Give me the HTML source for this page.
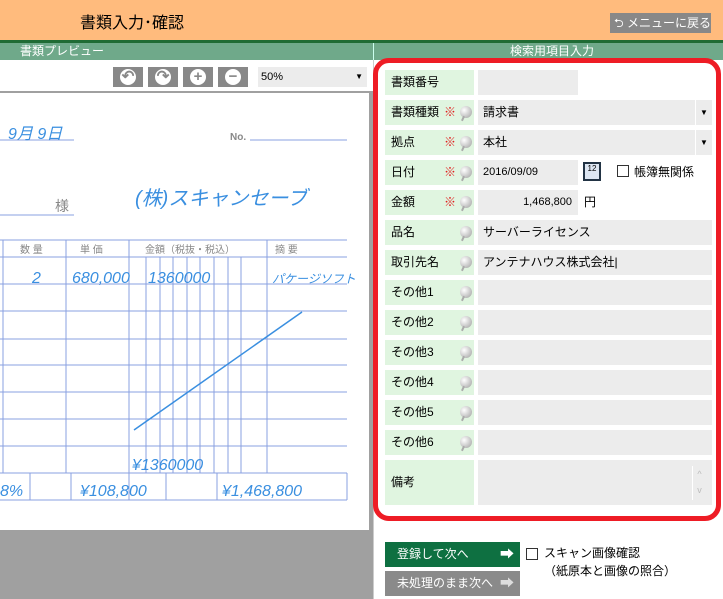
<!DOCTYPE html>
<html><head><meta charset="utf-8"><style>
*{margin:0;padding:0;box-sizing:border-box}
body{width:723px;height:599px;overflow:hidden;background:#fff;font-family:"Liberation Sans","Noto Sans CJK JP",sans-serif;position:relative;font-size:12px;color:#000}
.a{position:absolute}
.lbl{position:absolute;left:385px;width:89px;height:25px;background:#e0f5e0;font-size:12px;line-height:25px;padding-left:6px}
.inp{position:absolute;left:478px;height:25px;background:#ececec;font-size:12px;line-height:25px;padding-left:5px}
.req{position:absolute;left:444px;color:#e02020;font-size:12px;line-height:25px}
.pin{position:absolute;left:460px;width:12px;height:12px;border-radius:50%;background:radial-gradient(circle at 35% 35%,#fff,#bbb 70%,#999)}
.pin:after{content:"";position:absolute;left:2px;top:10px;width:2px;height:5px;background:#aaa;transform:rotate(25deg)}
.tb{position:absolute;top:67px;width:30px;height:20px;background:#888}
.tb i{position:absolute;left:7px;top:2px;width:16px;height:16px;border-radius:50%;background:#fff;color:#888;font-style:normal;font-weight:bold;font-size:15px;line-height:16px;text-align:center}
</style></head><body>
<div class="a" style="left:0;top:0;width:723px;height:40px;background:#ffbb7d"></div>
<div class="a" style="left:80px;top:9px;font-size:16px">書類入力･確認</div>
<div class="a" style="left:610px;top:13px;width:101px;height:20px;background:#888;color:#fff;font-size:12px;line-height:20px;padding-left:4px">⮌ メニューに戻る</div>
<div class="a" style="left:0;top:40px;width:723px;height:3px;background:#1f6b34"></div>
<div class="a" style="left:0;top:43px;width:723px;height:17px;background:#6fa98a"></div>
<div class="a" style="left:373px;top:43px;width:1px;height:17px;background:#cfe"></div>
<div class="a" style="left:20px;top:43px;color:#fff;font-size:12px;line-height:17px">書類プレビュー</div>
<div class="a" style="left:510px;top:43px;color:#fff;font-size:12px;line-height:17px">検索用項目入力</div>
<div class="tb" style="left:113px"><i>↶</i></div>
<div class="tb" style="left:148px"><i>↷</i></div>
<div class="tb" style="left:183px"><i>+</i></div>
<div class="tb" style="left:218px"><i>−</i></div>
<div class="a" style="left:258px;top:67px;width:109px;height:20px;background:#ececec;font-size:11px;line-height:20px;padding-left:3px">50%<span style="position:absolute;right:4px;font-size:8px">▼</span></div>
<div class="a" style="left:0;top:91px;width:373px;height:508px;background:#a0a0a0"></div>
<svg class="a" style="left:0;top:93px" width="369" height="437" viewBox="0 0 369 437">
<rect width="369" height="437" fill="#fff"/>
<g stroke="#8aa0e0" stroke-width="1" fill="none">
<line x1="0" y1="47" x2="74" y2="47"/><line x1="250" y1="47" x2="347" y2="47"/>
<line x1="0" y1="122" x2="74" y2="122"/>
<line x1="0" y1="147" x2="347" y2="147"/><line x1="0" y1="164" x2="347" y2="164"/>
<line x1="0" y1="191" x2="347" y2="191"/><line x1="0" y1="218" x2="347" y2="218"/>
<line x1="0" y1="246" x2="347" y2="246"/><line x1="0" y1="272" x2="347" y2="272"/>
<line x1="0" y1="299" x2="347" y2="299"/><line x1="0" y1="326" x2="347" y2="326"/>
<line x1="0" y1="353" x2="347" y2="353"/><line x1="0" y1="380" x2="347" y2="380"/>
<line x1="0" y1="407" x2="347" y2="407"/>
<line x1="3" y1="147" x2="3" y2="380"/><line x1="66" y1="147" x2="66" y2="380"/>
<line x1="129" y1="147" x2="129" y2="407"/><line x1="267" y1="147" x2="267" y2="380"/>
<line x1="146" y1="164" x2="146" y2="380"/><line x1="160" y1="164" x2="160" y2="380"/><line x1="173" y1="164" x2="173" y2="380"/><line x1="187" y1="164" x2="187" y2="380"/><line x1="200" y1="164" x2="200" y2="380"/><line x1="214" y1="164" x2="214" y2="380"/><line x1="228" y1="164" x2="228" y2="380"/><line x1="241" y1="164" x2="241" y2="380"/>
<line x1="30" y1="380" x2="30" y2="407"/><line x1="71" y1="380" x2="71" y2="407"/><line x1="166" y1="380" x2="166" y2="407"/><line x1="217" y1="380" x2="217" y2="407"/><line x1="347" y1="380" x2="347" y2="407"/>
</g>
<line x1="134" y1="337" x2="302" y2="219" stroke="#3a8fe0" stroke-width="1.5"/>
<g fill="#3a8fe0" font-size="16" font-style="italic">
<text x="8" y="46">9月 9日</text>
<text x="135" y="112" font-size="20">(株)スキャンセーブ</text>
<text x="32" y="190">2</text><text x="72" y="190">680,000</text><text x="148" y="190">1360000</text>
<text x="272" y="190" font-size="12">パケージソフト</text>
<text x="132" y="377">¥1360000</text>
<text x="0" y="403">8%</text><text x="80" y="403">¥108,800</text><text x="222" y="403">¥1,468,800</text>
</g>
<g fill="#888" font-size="10"><text x="230" y="47" font-weight="bold">No.</text><text x="55" y="118" font-size="14">様</text>
<text x="20" y="160">数 量</text><text x="80" y="160">単 価</text><text x="145" y="160">金額（税抜・税込）</text><text x="275" y="160">摘 要</text></g>
</svg>
<div class="a" style="left:373px;top:60px;width:1px;height:539px;background:#ccc"></div>
<div class="a" style="left:373px;top:58px;width:348px;height:463px;border:5px solid #ee1c25;border-radius:16px"></div>

<div class="lbl" style="top:70px">書類番号</div><div class="inp" style="top:70px;width:100px"></div>

<div class="lbl" style="top:100px">書類種類</div><span class="req" style="top:100px">※</span><span class="pin" style="top:106px"></span>
<div class="inp" style="top:100px;width:234px">請求書<span style="position:absolute;right:0;width:17px;border-left:1px solid #fff;text-align:center;font-size:8px">▼</span></div>
<div class="lbl" style="top:130px">拠点</div><span class="req" style="top:130px">※</span><span class="pin" style="top:136px"></span>
<div class="inp" style="top:130px;width:234px">本社<span style="position:absolute;right:0;width:17px;border-left:1px solid #fff;text-align:center;font-size:8px">▼</span></div>
<div class="lbl" style="top:160px">日付</div><span class="req" style="top:160px">※</span><span class="pin" style="top:166px"></span>
<div class="inp" style="top:160px;width:100px;font-size:11px">2016/09/09</div>
<div class="a" style="left:583px;top:162px;width:18px;height:19px;background:#dde6f2;border:2px solid #234;font-size:8px;text-align:center;line-height:10px">12</div>
<div class="a" style="left:617px;top:165px;width:12px;height:12px;border:1px solid #333"></div>
<div class="a" style="left:634px;top:160px;line-height:25px">帳簿無関係</div>
<div class="lbl" style="top:190px">金額</div><span class="req" style="top:190px">※</span><span class="pin" style="top:196px"></span>
<div class="inp" style="top:190px;width:100px;text-align:right;padding-right:6px;font-size:11px">1,468,800</div>
<div class="a" style="left:584px;top:190px;line-height:25px">円</div>
<div class="lbl" style="top:220px">品名</div><span class="pin" style="top:226px"></span><div class="inp" style="top:220px;width:234px">サーバーライセンス</div>
<div class="lbl" style="top:250px">取引先名</div><span class="pin" style="top:256px"></span><div class="inp" style="top:250px;width:234px">アンテナハウス株式会社|</div>
<div class="lbl" style="top:280px">その他1</div><span class="pin" style="top:286px"></span><div class="inp" style="top:280px;width:234px"></div>
<div class="lbl" style="top:310px">その他2</div><span class="pin" style="top:316px"></span><div class="inp" style="top:310px;width:234px"></div>
<div class="lbl" style="top:340px">その他3</div><span class="pin" style="top:346px"></span><div class="inp" style="top:340px;width:234px"></div>
<div class="lbl" style="top:370px">その他4</div><span class="pin" style="top:376px"></span><div class="inp" style="top:370px;width:234px"></div>
<div class="lbl" style="top:400px">その他5</div><span class="pin" style="top:406px"></span><div class="inp" style="top:400px;width:234px"></div>
<div class="lbl" style="top:430px">その他6</div><span class="pin" style="top:436px"></span><div class="inp" style="top:430px;width:234px"></div>
<div class="lbl" style="top:460px;height:45px;line-height:45px">備考</div><div class="inp" style="top:460px;width:234px;height:45px"><span style="position:absolute;right:6px;top:6px;width:14px;height:34px;border-left:1px solid #fff;color:#bbb;font-size:9px;line-height:16px;text-align:center">^<br>v</span></div>

<div class="a" style="left:385px;top:542px;width:135px;height:25px;background:#0e7041;color:#fff;line-height:25px;padding-left:12px">登録して次へ<span style="position:absolute;right:6px;font-weight:bold;font-size:14px">➡</span></div>
<div class="a" style="left:385px;top:571px;width:135px;height:25px;background:#8a8a8a;color:#fff;line-height:25px;padding-left:12px">未処理のまま次へ<span style="position:absolute;right:6px;font-weight:bold;font-size:14px;color:#ddd">➡</span></div>
<div class="a" style="left:526px;top:548px;width:12px;height:12px;border:1px solid #333"></div>
<div class="a" style="left:544px;top:544px;line-height:18px">スキャン画像確認<br>（紙原本と画像の照合）</div>
</body></html>
